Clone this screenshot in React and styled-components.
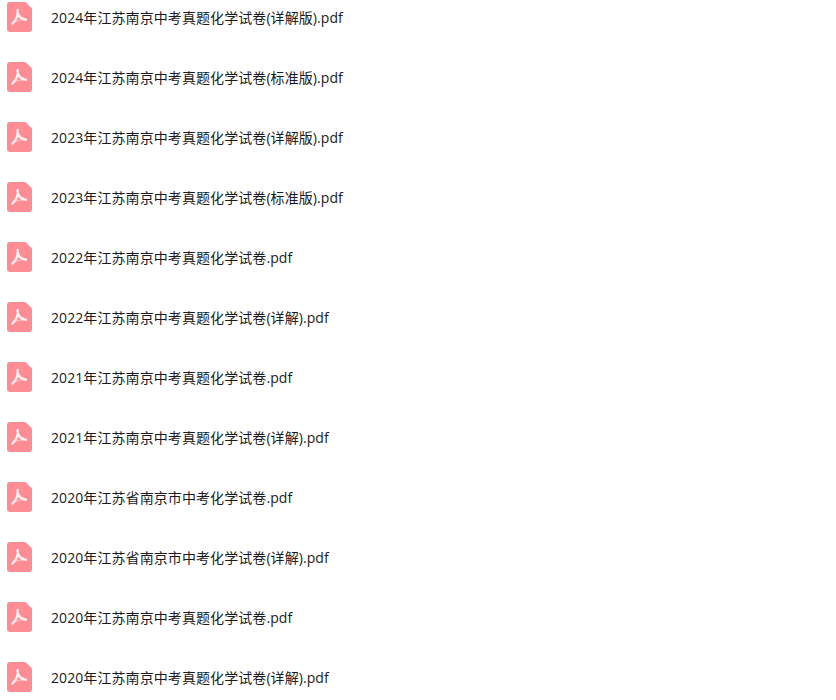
import React from "react";
import styled, { createGlobalStyle } from "styled-components";

const files = [
  "2024年江苏南京中考真题化学试卷(详解版).pdf",
  "2024年江苏南京中考真题化学试卷(标准版).pdf",
  "2023年江苏南京中考真题化学试卷(详解版).pdf",
  "2023年江苏南京中考真题化学试卷(标准版).pdf",
  "2022年江苏南京中考真题化学试卷.pdf",
  "2022年江苏南京中考真题化学试卷(详解).pdf",
  "2021年江苏南京中考真题化学试卷.pdf",
  "2021年江苏南京中考真题化学试卷(详解).pdf",
  "2020年江苏省南京市中考化学试卷.pdf",
  "2020年江苏省南京市中考化学试卷(详解).pdf",
  "2020年江苏南京中考真题化学试卷.pdf",
  "2020年江苏南京中考真题化学试卷(详解).pdf",
];

const GlobalStyle = createGlobalStyle`
  html, body {
    margin: 0;
    height: 100%;
    overflow: hidden;
    background: #fff;
  }
`;

const FileList = styled.ul`
  list-style: none;
  margin: -12px 0 0;
  padding: 0 0 0 7px;
  font-family: "Open Sans", "Noto Sans CJK SC", sans-serif;
  font-size: 14px;
  letter-spacing: 0.08px;
  color: #181b22;
`;

const FileRow = styled.li`
  display: flex;
  align-items: center;
  gap: 19px;
  height: 60px;
`;

const FileName = styled.span`
  line-height: 20px;
  white-space: nowrap;
`;

const IconSvg = styled.svg`
  flex: none;
  width: 25px;
  height: 30px;
  margin-bottom: 2px;
`;

function PdfIcon() {
  return (
    <IconSvg viewBox="0 0 25 30">
      <path
        d="M3 0H18.5L25 6.5V27a3 3 0 0 1-3 3H3a3 3 0 0 1-3-3V3a3 3 0 0 1 3-3Z"
        fill="#fe8c95"
      />
      <path
        d="M10.6 8C11.4 13 9.6 17.6 5.4 21.6M10.8 11.5C12 14.6 14.6 17 19 17.8"
        fill="none"
        stroke="#fff0f1"
        strokeWidth="2.4"
        strokeLinecap="round"
        strokeLinejoin="round"
      />
      <path
        d="M5.4 21.6C9 18.8 13.5 17.4 19 17.8"
        fill="none"
        stroke="#fff0f1"
        strokeOpacity="0.55"
        strokeWidth="1"
      />
    </IconSvg>
  );
}

export default function App() {
  return (
    <>
      <GlobalStyle />
      <FileList>
        {files.map((name) => (
          <FileRow key={name}>
            <PdfIcon />
            <FileName>{name}</FileName>
          </FileRow>
        ))}
      </FileList>
    </>
  );
}
